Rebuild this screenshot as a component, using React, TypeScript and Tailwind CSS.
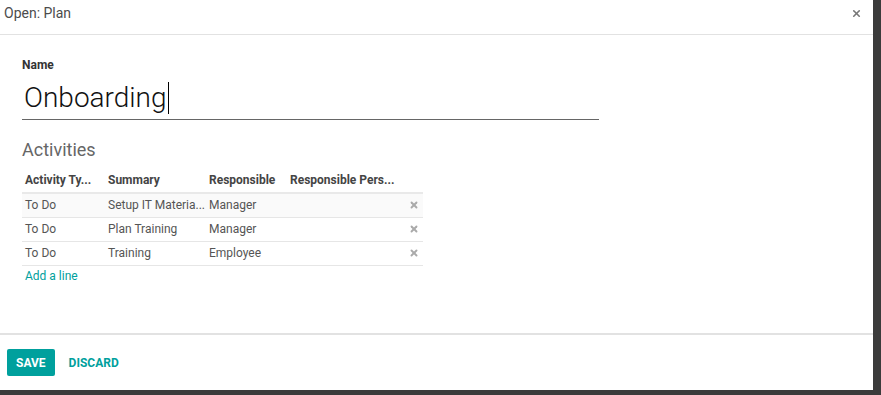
import { X } from 'lucide-react';

const rows = [
  { type: 'To Do', summary: 'Setup IT Materia...', responsible: 'Manager' },
  { type: 'To Do', summary: 'Plan Training', responsible: 'Manager' },
  { type: 'To Do', summary: 'Training', responsible: 'Employee' },
];

export default function App() {
  return (
    <div className="flex h-[395px] w-[881px] bg-[#3b3b3b] pb-[5px] pr-[8px] font-['Roboto',sans-serif]">
      <div className="flex flex-1 flex-col bg-white">
        <header className="flex h-[35px] items-start justify-between border-b border-[#e2e2e2] pl-[4px] pr-[11px] pt-[4px]">
          <h4 className="text-[14px] leading-[18px] text-[#4c4c4c]">Open: Plan</h4>
          <X className="mt-[4px] h-[11px] w-[11px] text-[#777]" strokeWidth={3.5} />
        </header>

        <main className="flex-1 px-[22px] pt-[22px]">
          <label className="block text-[12px] font-bold leading-[16px] text-[#333]">Name</label>
          <div className="mt-[3px] flex h-[44px] w-[577px] items-center border-b border-[#666]">
            <span className="pl-[2px] text-[28px] font-light leading-[32px] text-[#111]">Onboarding</span>
            <span className="ml-[1px] h-[32px] w-[1px] bg-black" />
          </div>

          <h3 className="mt-[19px] text-[18px] leading-[22px] text-[#666]">Activities</h3>

          <table className="mt-[7px] w-[401px] table-fixed border-collapse text-[12px]">
            <thead>
              <tr className="h-[25px] border-b-2 border-[#e9e9e9] text-left font-bold text-[#444]">
                <th className="w-[83px] pl-[3px] font-bold">Activity Ty...</th>
                <th className="w-[101px] pl-[3px] font-bold">Summary</th>
                <th className="w-[81px] pl-[3px] font-bold">Responsible</th>
                <th className="pl-[3px] font-bold">Responsible Pers...</th>
                <th className="w-[20px]" />
              </tr>
            </thead>
            <tbody className="text-[#555]">
              {rows.map((r, i) => (
                <tr key={i} className={`h-[24px] border-b border-[#e6e6e6] ${i === 0 ? 'bg-[#fafafa]' : 'bg-white'}`}>
                  <td className="pl-[3px]">{r.type}</td>
                  <td className="truncate pl-[3px]">{r.summary}</td>
                  <td className="pl-[3px]">{r.responsible}</td>
                  <td />
                  <td className="pr-[4px]">
                    <X className="ml-auto h-[10px] w-[10px] text-[#aaa]" strokeWidth={4.5} />
                  </td>
                </tr>
              ))}
            </tbody>
          </table>
          <a className="mt-[2px] block pl-[3px] text-[12px] leading-[16px] text-[#00a09d]">Add a line</a>
        </main>

        <footer className="flex h-[57px] items-center gap-[14px] border-t-2 border-[#e2e2e2] px-[7px]">
          <button className="h-[27px] rounded-[2px] bg-[#00a09d] px-[9px] text-[12px] font-bold text-white">
            SAVE
          </button>
          <button className="text-[12px] font-bold text-[#00a09d]">DISCARD</button>
        </footer>
      </div>
    </div>
  );
}
